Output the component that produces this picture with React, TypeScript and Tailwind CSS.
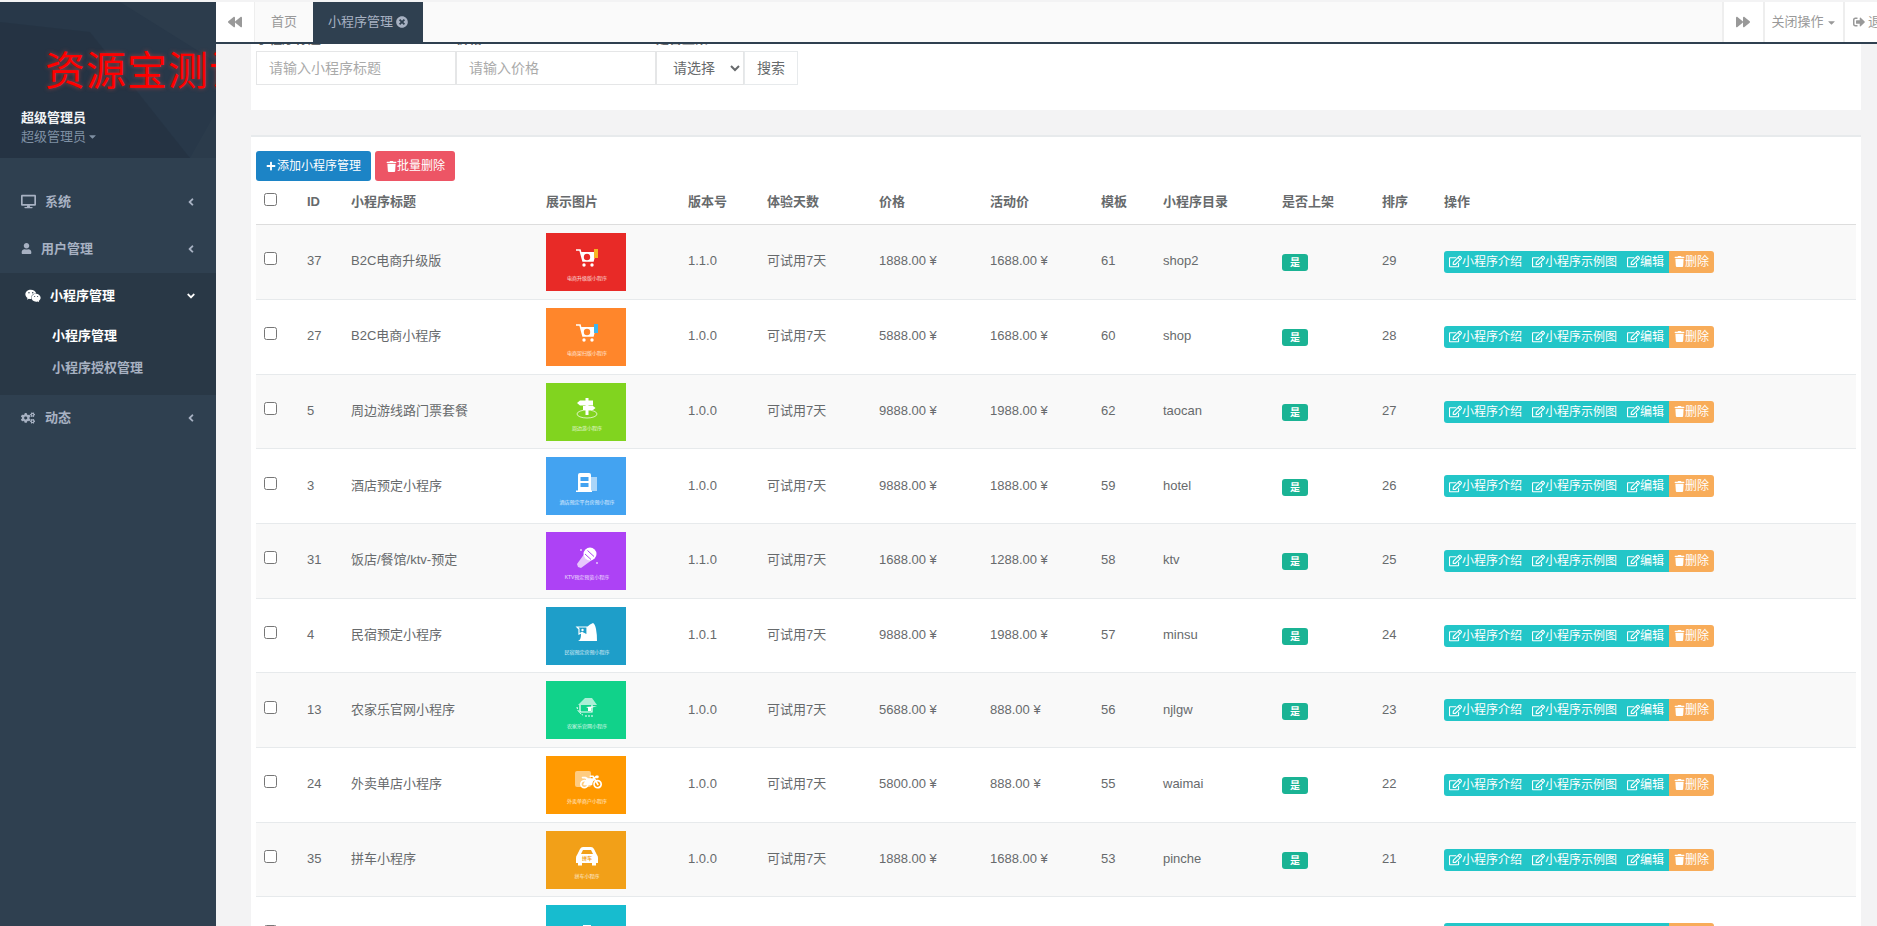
import React from 'react';
import {
  FaAngleDown, FaAngleLeft, FaBackward, FaCaretDown, FaCogs, FaDesktop, FaForward,
  FaMotorcycle, FaPlus, FaRegEdit, FaSignOutAlt, FaTimesCircle, FaTrash, FaUser, FaWeixin,
} from 'react-icons/fa';

const CartIcon = ({ accent, fill }: { accent: string; fill: string }) => (
  <svg width="24" height="21" viewBox="0 0 24 21">
    <path d="M1 2h4l3 11h10l2-8H6" fill="none" stroke="#fff" strokeWidth="1.6" />
    <path d="M6 4h14l-2 9H8z" fill="#fff" />
    <circle cx="12" cy="9" r="3.2" fill={fill} />
    <circle cx="9" cy="17" r="1.7" fill="#fff" />
    <circle cx="17" cy="17" r="1.7" fill="#fff" />
    <rect x="19" y="1" width="4" height="9" fill={accent} />
  </svg>
);

const SignIcon = () => (
  <svg width="24" height="21" viewBox="0 0 24 21">
    <ellipse cx="12" cy="16" rx="10" ry="4" fill="none" stroke="#fff" strokeOpacity=".7" strokeWidth="1" />
    <rect x="10.5" y="0" width="3" height="17" fill="#fff" />
    <path d="M2 5l3-2.5h13v5H5z" fill="#fff" />
    <path d="M8 8h10l2.5 2-2.5 2H8z" fill="#fff" />
  </svg>
);

const HotelIcon = ({ fill }: { fill: string }) => (
  <svg width="24" height="21" viewBox="0 0 24 21">
    <rect x="15" y="5" width="7" height="14" fill="#fff" fillOpacity=".55" />
    <path d="M3 19V3q0-2 2-2h9q2 0 2 2v16z" fill="#fff" />
    <rect x="5.5" y="5" width="8" height="4" fill={fill} />
    <rect x="5.5" y="11" width="8" height="4" fill={fill} />
    <rect x="1" y="18.5" width="16" height="1.5" fill="#fff" />
  </svg>
);

const MicIcon = ({ fill }: { fill: string }) => (
  <svg width="24" height="22" viewBox="0 0 24 22">
    <path d="M10 6l7 7-11 8-3-1-1-3z" fill="#fff" fillOpacity=".7" />
    <circle cx="15" cy="7" r="6.5" fill="#fff" />
    <path d="M10 7l6 5.5M12.5 3.5l6.5 6" stroke={fill} strokeWidth="1" />
    <circle cx="6" cy="3" r="1" fill="#fff" fillOpacity=".7" />
    <circle cx="22" cy="16" r="1" fill="#fff" fillOpacity=".7" />
  </svg>
);

const InnIcon = ({ fill }: { fill: string }) => (
  <svg width="24" height="21" viewBox="0 0 24 21">
    <path d="M3 19q3-1 3-6V5h6q3-3 6-4 2 1 3 6t1 12z" fill="#fff" />
    <path d="M2 5h10v8l-5-2.5L4 12V7z" fill={fill} stroke="#fff" strokeWidth="1.2" />
    <circle cx="7.5" cy="8" r="1.2" fill="#fff" />
  </svg>
);

const FarmIcon = ({ fill }: { fill: string }) => (
  <svg width="24" height="21" viewBox="0 0 24 21">
    <path d="M3 9l7-7h7l5 7z" fill="#fff" fillOpacity=".65" />
    <path d="M5 9v7h12V9" fill="none" stroke="#fff" strokeWidth="1.2" />
    <path d="M11 11l11-1-6 2v3h-3v-3z" fill="#fff" />
    <path d="M2 11q1 6 6 8M10 20h8" fill="none" stroke="#fff" strokeWidth="1" strokeDasharray="2 1" />
    <rect x="7" y="11" width="2" height="2" fill={fill} />
  </svg>
);

const TakeawayIcon = () => (
  <div className="relative w-[24px] h-[21px]">
    <div className="absolute left-0 top-0 w-[16px] h-[16px] bg-white/50 rounded-[2px]" />
    <FaMotorcycle size={22} className="absolute right-[-3px] bottom-[-1px] text-white" />
  </div>
);

const CarIcon = () => (
  <div className="relative flex justify-center w-[24px] h-[21px]">
    <svg width="24" height="21" viewBox="0 0 24 21">
      <path d="M2 9l3-6q1-2 3-2h8q2 0 3 2l3 6q1 1 1 3v5H1v-5q0-2 1-3z" fill="#fff" />
      <path d="M6 8l2-4h8l2 4z" fill="#f2a018" />
      <rect x="3" y="17" width="4" height="2.5" fill="#fff" />
      <rect x="17" y="17" width="4" height="2.5" fill="#fff" />
    </svg>
    <span className="absolute top-[9px] text-[5px] leading-[6px] font-bold text-[#f2a018]">拼车</span>
  </div>
);

const HomeIcon = () => (
  <svg width="24" height="21" viewBox="0 0 24 21">
    <rect x="8" y="5" width="8" height="16" fill="#fff" />
  </svg>
);

const rows = [
  { id: 37, title: 'B2C电商升级版', color: '#e82a27', caption: '电商升级版小程序', icon: <CartIcon accent="#f7b522" fill="#e82a27" />, ver: '1.1.0', price: '1888.00', sale: '1688.00', tpl: 61, dir: 'shop2', sort: 29 },
  { id: 27, title: 'B2C电商小程序', color: '#ff862b', caption: '电商架扫版小程序', icon: <CartIcon accent="#3fb5ee" fill="#ff862b" />, ver: '1.0.0', price: '5888.00', sale: '1688.00', tpl: 60, dir: 'shop', sort: 28 },
  { id: 5, title: '周边游线路门票套餐', color: '#81d41f', caption: '周边游小程序', icon: <SignIcon />, ver: '1.0.0', price: '9888.00', sale: '1988.00', tpl: 62, dir: 'taocan', sort: 27 },
  { id: 3, title: '酒店预定小程序', color: '#43a3f1', caption: '酒店预定平台房预小程序', icon: <HotelIcon fill="#43a3f1" />, ver: '1.0.0', price: '9888.00', sale: '1888.00', tpl: 59, dir: 'hotel', sort: 26 },
  { id: 31, title: '饭店/餐馆/ktv-预定', color: '#ad42f5', caption: 'KTV预定预览小程序', icon: <MicIcon fill="#ad42f5" />, ver: '1.1.0', price: '1688.00', sale: '1288.00', tpl: 58, dir: 'ktv', sort: 25 },
  { id: 4, title: '民宿预定小程序', color: '#1e9ec9', caption: '民宿预定房预小程序', icon: <InnIcon fill="#1e9ec9" />, ver: '1.0.1', price: '9888.00', sale: '1988.00', tpl: 57, dir: 'minsu', sort: 24 },
  { id: 13, title: '农家乐官网小程序', color: '#11d28a', caption: '农家乐官网小程序', icon: <FarmIcon fill="#11d28a" />, ver: '1.0.0', price: '5688.00', sale: '888.00', tpl: 56, dir: 'njlgw', sort: 23 },
  { id: 24, title: '外卖单店小程序', color: '#ff9900', caption: '外卖单商户小程序', icon: <TakeawayIcon />, ver: '1.0.0', price: '5800.00', sale: '888.00', tpl: 55, dir: 'waimai', sort: 22 },
  { id: 35, title: '拼车小程序', color: '#f2a018', caption: '拼车小程序', icon: <CarIcon />, ver: '1.0.0', price: '1888.00', sale: '1688.00', tpl: 53, dir: 'pinche', sort: 21 },
  { id: 30, title: '家政小程序', color: '#17bccf', caption: '家政小程序', icon: <HomeIcon />, ver: '1.0.0', price: '1888.00', sale: '1688.00', tpl: 52, dir: 'jiazheng', sort: 20 },
];

const headers = ['ID', '小程序标题', '展示图片', '版本号', '体验天数', '价格', '活动价', '模板', '小程序目录', '是否上架', '排序', '操作'];

const NavItem = ({ icon, label, textClass }: { icon: React.ReactNode; label: string; textClass: string }) => (
  <div className="flex items-center h-[47px] pb-[2px] pl-[21px] pr-[19px] text-[#a7b1c2] font-bold">
    <span className="flex items-center">{icon}</span>
    <span className={textClass}>{label}</span>
    <FaAngleLeft size={12} className="ml-auto" />
  </div>
);

const Sidebar = () => (
  <aside className="w-[216px] shrink-0 bg-[#2f4050] overflow-hidden">
    <div className="relative h-[156px] bg-[#283849] overflow-hidden">
      <svg className="absolute inset-0" width="216" height="156" viewBox="0 0 216 156">
        <polygon points="0,0 216,0 216,60 120,0" fill="#2f4050" fillOpacity=".5" />
        <polygon points="0,20 90,30 190,156 0,156" fill="#243241" fillOpacity=".7" />
        <polygon points="216,110 190,156 216,156" fill="#2f4050" fillOpacity=".4" />
      </svg>
      <div className="relative pl-[45px] pt-[46px] whitespace-nowrap text-[40px] leading-[46px] tracking-[1px] text-[#ff0000] [text-shadow:0_0_4px_#a04040]">
        资源宝测试
      </div>
      <div className="relative pl-[21px] mt-[14px]">
        <div className="text-[#f1f3f6] font-bold leading-[19px]">超级管理员</div>
        <div className="flex items-center text-[#7f90a3] leading-[19px]">
          超级管理员
          <FaCaretDown size={11} className="ml-[1px]" />
        </div>
      </div>
    </div>
    <nav className="pt-[21px]">
      <NavItem icon={<FaDesktop size={15} />} label="系统" textClass="ml-[9px]" />
      <NavItem icon={<FaUser size={11} />} label="用户管理" textClass="ml-[9px]" />
      <div className="bg-[#293846] h-[122px]">
        <div className="flex items-center h-[47px] pb-[2px] pl-[25px] pr-[19px] text-white font-bold">
          <FaWeixin size={16} />
          <span className="ml-[9px]">小程序管理</span>
          <FaAngleDown size={12} className="ml-auto" />
        </div>
        <div className="pl-[52px] font-bold">
          <div className="h-[31px] leading-[31px] text-white">小程序管理</div>
          <div className="h-[33px] leading-[33px] text-[#a7b1c2]">小程序授权管理</div>
        </div>
      </div>
      <NavItem icon={<FaCogs size={14} />} label="动态" textClass="ml-[10px]" />
    </nav>
  </aside>
);

const TopBar = () => (
  <header className="relative z-10 flex h-[42px] shrink-0 bg-[#fafafa] border-b-2 border-[#2f4050] text-[#999]">
    <div className="flex items-center justify-center w-[39px] bg-white border-r border-[#eee]">
      <FaBackward size={14} />
    </div>
    <div className="flex items-center w-[58px] justify-center">首页</div>
    <div className="flex items-center gap-[3px] w-[110px] pl-[15px] bg-[#2f4050] text-[#a7b1c2]">
      小程序管理
      <FaTimesCircle size={12} />
    </div>
    <div className="flex ml-auto bg-white">
      <div className="flex items-center justify-center w-[41px] pr-[2px] border-l-2 border-[#eee]">
        <FaForward size={14} />
      </div>
      <div className="flex items-center justify-center w-[80px] border-l-2 border-[#eee]">
        关闭操作
        <FaCaretDown size={11} className="ml-[2px]" />
      </div>
      <div className="flex items-center w-[34px] pl-[8px] gap-[3px] border-l-2 border-[#eee] whitespace-nowrap overflow-hidden">
        <FaSignOutAlt size={12} className="shrink-0" />
        退出
      </div>
    </div>
  </header>
);

const SearchForm = () => (
  <div className="bg-white pl-[5px] pb-[25px] -mt-[14px]">
    <div className="flex font-bold leading-[18px] mb-[3px]">
      <label className="w-[200px]">小程序标题:</label>
      <label className="w-[200px]">价格:</label>
      <label>是否上架:</label>
    </div>
    <div className="flex text-[14px]">
      <input className="w-[200px] h-[34px] px-[12px] border border-[#e5e6e7] outline-none placeholder:text-[#aaa]" placeholder="请输入小程序标题" />
      <input className="w-[200px] h-[34px] px-[12px] border border-[#e5e6e7] outline-none placeholder:text-[#aaa]" placeholder="请输入价格" />
      <select className="w-[88px] h-[34px] pl-[12px] border border-[#e5e6e7] bg-white outline-none">
        <option>请选择</option>
      </select>
      <button className="w-[54px] h-[34px] border border-[#e7eaec] bg-white text-[#676a6c]">搜索</button>
    </div>
  </div>
);

const Thumb = ({ color, caption, icon }: { color: string; caption: string; icon: React.ReactNode }) => (
  <div className="flex flex-col items-center w-[80px] h-[58px] pt-[15px] pl-[2px]" style={{ backgroundColor: color }}>
    <div className="h-[21px]">{icon}</div>
    <div className="mt-[6px] text-[5px] leading-[6px] text-white/80 whitespace-nowrap">{caption}</div>
  </div>
);

const Actions = () => (
  <div className="inline-flex h-[22px] text-[12px] text-white mt-[1px]">
    <span className="flex items-center bg-[#23c6c8] rounded-l-[3px] px-[5px]"><FaRegEdit className="w-[13px] h-[13px]" />小程序介绍</span>
    <span className="flex items-center bg-[#23c6c8] px-[5px]"><FaRegEdit className="w-[13px] h-[13px]" />小程序示例图</span>
    <span className="flex items-center bg-[#23c6c8] px-[5px]"><FaRegEdit className="w-[13px] h-[13px]" />编辑</span>
    <span className="flex items-center bg-[#f8ac59] rounded-r-[3px] px-[5px]"><FaTrash className="w-[11px] h-[11px]" />删除</span>
  </div>
);

const DataTable = () => (
  <table className="w-[1600px] table-fixed border-collapse">
    <colgroup>
      <col className="w-[43px]" />
      <col className="w-[44px]" />
      <col className="w-[195px]" />
      <col className="w-[142px]" />
      <col className="w-[79px]" />
      <col className="w-[112px]" />
      <col className="w-[111px]" />
      <col className="w-[111px]" />
      <col className="w-[62px]" />
      <col className="w-[119px]" />
      <col className="w-[100px]" />
      <col className="w-[62px]" />
      <col className="w-[420px]" />
    </colgroup>
    <thead>
      <tr className="h-[43px] border-b border-[#ddd]">
        <th className="px-[8px] text-left font-bold"><input type="checkbox" className="block w-[13px] h-[13px] mb-[5px]" /></th>
        {headers.map((h) => (
          <th key={h} className="px-[8px] pb-[2px] text-left font-bold">{h}</th>
        ))}
      </tr>
    </thead>
    <tbody>
      {rows.map((r, i) => (
        <tr key={r.id} className={`${i === 0 ? 'h-[75.67px]' : 'h-[74.67px]'} border-b border-[#e7eaec] ${i % 2 === 0 ? 'bg-[#f9f9f9]' : 'bg-white'}`}>
          <td className="px-[8px]"><input type="checkbox" className="block w-[13px] h-[13px] mb-[6px]" /></td>
          <td className="px-[8px] pb-[2px]">{r.id}</td>
          <td className="px-[8px] pb-[2px]">{r.title}</td>
          <td className="px-[8px]"><Thumb color={r.color} caption={r.caption} icon={r.icon} /></td>
          <td className="px-[8px] pb-[2px]">{r.ver}</td>
          <td className="px-[8px] pb-[2px]">可试用7天</td>
          <td className="px-[8px] pb-[2px]">{r.price} ¥</td>
          <td className="px-[8px] pb-[2px]">{r.sale} ¥</td>
          <td className="px-[8px] pb-[2px]">{r.tpl}</td>
          <td className="px-[8px] pb-[2px]">{r.dir}</td>
          <td className="px-[8px]">
            <span className="inline-flex items-center justify-center w-[26px] h-[17px] mt-[2px] rounded-[3px] bg-[#1ab394] text-white text-[10px] font-bold">是</span>
          </td>
          <td className="px-[8px] pb-[2px]">{r.sort}</td>
          <td className="px-[8px]"><Actions /></td>
        </tr>
      ))}
    </tbody>
  </table>
);

export default function App() {
  return (
    <div className="flex h-screen overflow-hidden pt-[2px] bg-[#f3f3f4] text-[13px] text-[#676a6c] font-['Liberation_Sans','Noto_Sans_CJK_SC',sans-serif]">
      <Sidebar />
      <main className="flex flex-col flex-1 min-w-0">
        <TopBar />
        <div className="flex-1 min-h-0 overflow-hidden pl-[35px] pr-[16px]">
          <SearchForm />
          <section className="mt-[25px] bg-white border-t-2 border-[#e7eaec] pt-[14px] px-[5px]">
            <div className="flex gap-[4px] h-[30px] text-[12px]">
              <button className="flex items-center h-[30px] w-[115px] pl-[10px] rounded-[3px] bg-[#1c84c6] text-white">
                <FaPlus size={10} className="mr-[1px]" />添加小程序管理
              </button>
              <button className="flex items-center h-[30px] w-[80px] pl-[11px] rounded-[3px] bg-[#ed5565] text-white">
                <FaTrash size={11} />批量删除
              </button>
            </div>
            <DataTable />
          </section>
        </div>
      </main>
    </div>
  );
}
